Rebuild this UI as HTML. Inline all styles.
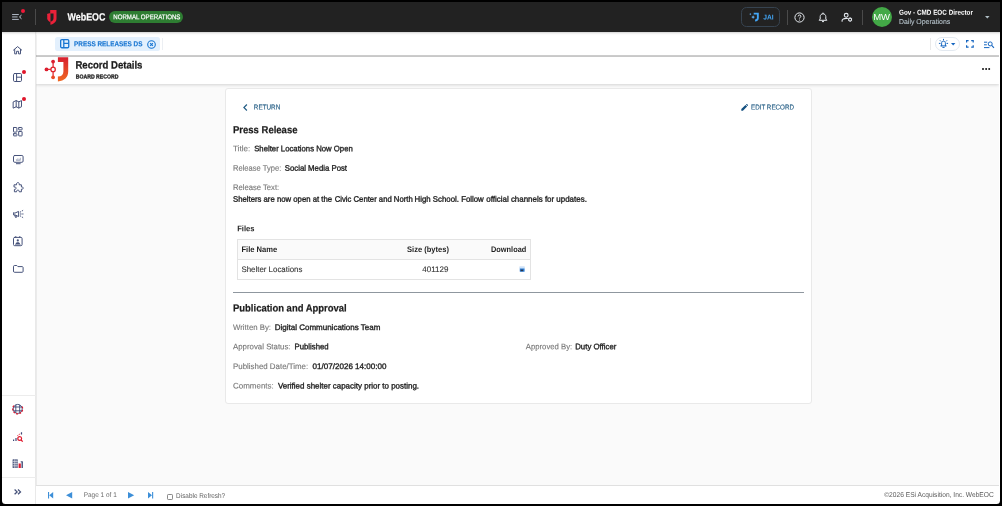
<!DOCTYPE html>
<html lang="en">
<head>
<meta charset="utf-8">
<title>WebEOC - Record Details</title>
<style>
*{box-sizing:border-box;margin:0;padding:0}
html,body{width:1002px;height:506px;overflow:hidden;background:#000}
body{font-family:"Liberation Sans",sans-serif;color:#222;position:relative}
.a{position:absolute}
.t{position:absolute;left:0;top:0;white-space:nowrap;line-height:20px;transform-origin:0 0;text-rendering:geometricPrecision}
svg{position:absolute;overflow:visible}
#frame{position:absolute;left:0;top:0;width:1002px;height:506px;background:#fafafa;overflow:hidden;will-change:transform}
#bezel{position:absolute;left:1.6px;top:1.7px;width:998.9px;height:502.7px;border-radius:0 0 3.5px 3.5px;box-shadow:0 0 0 14px #000;z-index:50;pointer-events:none}
#hdr{left:0;top:0;width:1002px;height:31.6px;background:#222;box-shadow:0 0 3px rgba(0,0,0,.35)}
#tabs{left:36px;top:32px;width:962.8px;height:25px;background:#fff;border-bottom:2px solid #cecece}
#rec{left:36px;top:57px;width:962.8px;height:27px;background:#fff;box-shadow:0 1px 3px rgba(0,0,0,.16)}
#side{left:0;top:32px;width:36px;height:474px;background:#fff;border-right:1px solid #e9e9e9;box-shadow:.5px 0 1px rgba(0,0,0,.06)}
#card{left:225px;top:88px;width:587px;height:315.5px;background:#fff;border:1px solid #e9e9e9;border-radius:3px}
#foot{left:36px;top:485px;width:962.8px;height:21px;background:#fff;border-top:1px solid #e0e0e0}
.vd{position:absolute;width:1px;background:#4a4a4a}
.dot{position:absolute;width:4px;height:4px;border-radius:50%;background:#e0162b}
.si{stroke:#46527a;fill:none;stroke-width:1;stroke-linecap:round;stroke-linejoin:round}
.bi{stroke:#1565c0;fill:none;stroke-width:1;stroke-linecap:round;stroke-linejoin:round}
</style>
</head>
<body>
<div id="frame">
  <div id="tabs" class="a"></div>
  <div id="rec" class="a"></div>
  <div id="side" class="a"></div>
  <div id="card" class="a"></div>
  <div id="foot" class="a"></div>
  <div class="a" style="left:998.8px;top:31px;width:4px;height:475px;background:#fff"></div>
  <div id="hdr" class="a"></div>

  <!-- ===== header ===== -->
  <svg style="left:12.2px;top:14px" width="10" height="6" viewBox="0 0 10 6"><path d="M.1 .55H6.8M.1 2.95H5.6M.1 5.4H6.8" stroke="#c3cddb" stroke-width=".9" fill="none"/><path d="M9.5 1.1L7.5 2.95L9.5 4.8" stroke="#c9d3e0" stroke-width="1" fill="none"/></svg>
  <div class="dot" style="left:20.6px;top:8.9px;width:4.6px;height:4.6px;background:#f01838"></div>
  <div class="vd" style="left:35px;top:9.1px;height:15.6px"></div>
  <!-- Juvare shield -->
  <svg style="left:46.8px;top:9.6px" width="9.8" height="15" viewBox="0 0 9.8 15"><path fill="#ea2139" d="M3.2 .1H9.5V8.4C9.5 11.8 6.9 13.8 3.4 14.8V11.8C5.4 11.1 6.5 10.1 6.5 8.2V3.4H3.2Z"/><path fill="#ea2139" d="M.2 4.2C.2 4 .3 3.9 .5 3.8L3.5 3V12.3C1.5 11.4 .2 10.1 .2 8.3Z"/></svg>
  <div class="a" style="left:109.2px;top:11px;width:74.3px;height:12px;border-radius:6px;background:#2e7d32"></div>
  <div class="a" style="left:741px;top:6.8px;width:39.2px;height:20.3px;border:1px solid #364350;border-radius:5.5px"></div>
  <!-- JAI icon -->
  <svg style="left:748.5px;top:12.2px" width="10" height="10" viewBox="0 0 10 10"><path d="M4.7 .8H9.8V5.9C9.8 8 8.3 9.2 6.1 9.4V7.6C7.3 7.4 7.9 6.9 7.9 5.8V2.5H4.7Z" fill="#42a5f5"/><path d="M4.1 3.2L4.7 4.5L6 5.1L4.7 5.7L4.1 7L3.5 5.7L2.2 5.1L3.5 4.5Z" fill="#64b5f6"/><path d="M1.3 1L1.65 1.75L2.4 2.1L1.65 2.45L1.3 3.2L.95 2.45L.2 2.1L.95 1.75Z" fill="#64b5f6"/></svg>
  <div class="vd" style="left:787px;top:9.5px;height:15px"></div>
  <!-- help -->
  <svg style="left:794.3px;top:11.6px" width="11" height="11" viewBox="0 0 11 11"><circle cx="5.5" cy="5.5" r="4.6" stroke="#e8ecf1" stroke-width="1" fill="none"/><path d="M4.1 4.4C4.1 3.5 4.7 3 5.5 3C6.3 3 6.9 3.5 6.9 4.3C6.9 5.2 5.5 5.4 5.5 6.5" stroke="#e8ecf1" stroke-width="1" fill="none"/><circle cx="5.5" cy="8" r=".6" fill="#e8ecf1"/></svg>
  <!-- bell -->
  <svg style="left:818px;top:11.6px" width="10" height="11" viewBox="0 0 10 11"><path d="M1.2 8.3H8.8L7.8 7V4.6C7.8 3 6.6 1.8 5 1.8C3.4 1.8 2.2 3 2.2 4.6V7Z" stroke="#e8ecf1" stroke-width="1" fill="none" stroke-linejoin="round"/><path d="M4 9.6H6" stroke="#e8ecf1" stroke-width="1"/><circle cx="5" cy="1.2" r=".7" fill="#e8ecf1"/></svg>
  <!-- person gear -->
  <svg style="left:840.5px;top:11.6px" width="12" height="11" viewBox="0 0 12 11"><circle cx="5.2" cy="3.3" r="1.9" stroke="#e4e9ef" stroke-width="1.1" fill="none"/><path d="M1.1 9.2V8.5C1.1 7.1 2.9 6.4 5.2 6.4C5.7 6.4 6.1 6.45 6.5 6.5" stroke="#e4e9ef" stroke-width="1.1" fill="none" stroke-linecap="round"/><circle cx="9.1" cy="7.6" r="1.5" stroke="#e4e9ef" stroke-width="1.1" fill="none"/><path d="M9.1 5.3V5.9M9.1 9.3V9.9M7.1 6.45L7.6 6.75M10.6 8.45L11.1 8.75M7.1 8.75L7.6 8.45M10.6 6.75L11.1 6.45" stroke="#e4e9ef" stroke-width=".8"/></svg>
  <div class="vd" style="left:862px;top:9.5px;height:15px"></div>
  <div class="a" style="left:871.8px;top:6.7px;width:20.2px;height:20.2px;border-radius:50%;background:#43a947"></div>
  <svg style="left:985px;top:16px" width="4.6" height="2.6" viewBox="0 0 46 26"><path d="M0 0H46L23 26Z" fill="#b0bec5"/></svg>

  <!-- ===== tab bar ===== -->
  <div class="a" style="left:54.7px;top:36.8px;width:105.5px;height:14.4px;border-radius:2.5px;background:#e3f0fd"></div>
  <svg style="left:60px;top:39.4px" width="9.4" height="9.4" viewBox="0 0 9.4 9.4"><rect x=".65" y=".65" width="8.1" height="8.1" rx="1.2" stroke="#1976d2" stroke-width="1.3" fill="none"/><path d="M3.8 .6V8.8M3.8 4.3H8.8" stroke="#1976d2" stroke-width="1.3" fill="none"/></svg>
  <svg style="left:147.2px;top:39.6px" width="9" height="9" viewBox="0 0 9 9"><circle cx="4.5" cy="4.5" r="3.8" stroke="#1976d2" stroke-width="1.1" fill="none"/><path d="M3.1 3.1L5.9 5.9M5.9 3.1L3.1 5.9" stroke="#1976d2" stroke-width="1.1"/></svg>
  <div class="a" style="left:161.6px;top:38px;width:1px;height:12px;background:#eceff3"></div>
  <div class="a" style="left:930.2px;top:38.3px;width:1px;height:11.4px;background:#e9e9e9"></div>
  <div class="a" style="left:935px;top:36.9px;width:24.7px;height:13.9px;border:1px solid #e3e9f0;border-radius:7px"></div>
  <!-- alarm/bug icon -->
  <svg style="left:938.8px;top:39px" width="9" height="9.4" viewBox="0 0 9 9.4"><path class="bi" d="M2.6 6.9V4.2C2.6 3 3.4 2.2 4.5 2.2C5.6 2.2 6.4 3 6.4 4.2V6.9M1.8 6.9H7.2M3.8 8.4H5.2"/><path class="bi" d="M4.5 .3V1M1.2 1.6L1.8 2.2M7.8 1.6L7.2 2.2M.3 4.4H1.1M7.9 4.4H8.7"/></svg>
  <svg style="left:950.8px;top:42.8px" width="4.4" height="2.4" viewBox="0 0 44 24"><path d="M0 0H44L22 24Z" fill="#1565c0"/></svg>
  <!-- fullscreen -->
  <svg style="left:965.8px;top:40px" width="7.8" height="7.8" viewBox="0 0 7.8 7.8"><path d="M.6 2.6V.6H2.6M5.2 .6H7.2V2.6M7.2 5.2V7.2H5.2M2.6 7.2H.6V5.2" stroke="#1565c0" stroke-width="1.2" fill="none"/></svg>
  <!-- list search -->
  <svg style="left:984px;top:40.6px" width="10.4" height="7.6" viewBox="0 0 10.4 7.6"><path d="M0 1.2H3.2M0 3.8H2.8M0 6.6H5.4" stroke="#1565c0" stroke-width="1"/><circle cx="6.2" cy="2.9" r="2" stroke="#1565c0" stroke-width="1" fill="none"/><path d="M7.7 4.4L10 6.8" stroke="#1565c0" stroke-width="1.1"/></svg>

  <!-- ===== record header ===== -->
  <svg style="left:44px;top:57px" width="25" height="25" viewBox="0 0 25 25">
    <defs><linearGradient id="jg" x1="0" y1="0" x2="0" y2="1"><stop offset="0" stop-color="#d81f2f"/><stop offset="1" stop-color="#f06a22"/></linearGradient></defs>
    <path d="M13.9 .3H24.2V14.6C24.2 20.6 20.4 23.9 13.9 24.6V19.6C17.6 19.2 19.4 17.6 19.4 14.4V4.9H13.9Z" fill="url(#jg)"/>
    <path d="M9.1 4.6V20.3M2.5 12.4H9.1" stroke="#e3303a" stroke-width="1.3" fill="none"/>
    <circle cx="9.1" cy="12.4" r="2.2" stroke="#e0262e" stroke-width="1.3" fill="#fff"/>
    <circle cx="9.1" cy="4.6" r="1.9" fill="#dc1f30"/><circle cx="9.1" cy="20.3" r="1.9" fill="#ea4a26"/><circle cx="2.5" cy="12.4" r="1.9" fill="#dc1f30"/>
  </svg>
  <div class="a" style="left:981.9px;top:68.2px;width:2px;height:2px;border-radius:50%;background:#111;box-shadow:3.1px 0 0 #111,6.2px 0 0 #111"></div>

  <!-- ===== sidebar icons ===== -->
  <!-- home -->
  <svg style="left:13.4px;top:46px" width="9.2" height="8.4" viewBox="0 0 9.2 8.4"><path class="si" d="M.5 4.1L4.6 .6L8.7 4.1M1.7 3.4V7.9H3.6V5.3H5.6V7.9H7.5V3.4"/></svg>
  <!-- boards -->
  <svg style="left:12.7px;top:73px" width="9" height="9" viewBox="0 0 9 9"><rect class="si" x=".5" y=".5" width="8" height="8" rx="1.2"/><path class="si" d="M3.6 .5V8.5M3.6 4.2H8.5"/></svg>
  <div class="dot" style="left:21.7px;top:69.5px"></div>
  <!-- map -->
  <svg style="left:12.7px;top:100.2px" width="9" height="8.6" viewBox="0 0 9 8.6"><path class="si" d="M.5 1.8L3.2 .6L5.8 1.8L8.5 .6V6.8L5.8 8L3.2 6.8L.5 8ZM3.2 .6V6.8M5.8 1.8V8"/></svg>
  <div class="dot" style="left:21.7px;top:96.8px"></div>
  <!-- dashboards -->
  <svg style="left:13px;top:127.4px" width="9.6" height="9.4" viewBox="0 0 9.6 9.4"><rect class="si" x=".5" y=".5" width="3.4" height="4.6" rx=".4"/><rect class="si" x="5.7" y=".5" width="3.4" height="2.4" rx=".4"/><rect class="si" x=".5" y="6.7" width="3.4" height="2.2" rx=".4"/><rect class="si" x="5.7" y="4.5" width="3.4" height="4.4" rx=".4"/></svg>
  <!-- monitor -->
  <svg style="left:12.7px;top:155px" width="10.6" height="9.2" viewBox="0 0 10.6 9.2"><rect class="si" x=".5" y=".5" width="9.6" height="6.8" rx="1.2"/><path class="si" d="M3.4 8.7H7.2"/><path d="M3 5.4H7.6M3.4 4.2V5M4.8 3.4V5M6.2 3.8V5M7.4 2.8V5" stroke="#8a93ad" stroke-width=".7" fill="none"/></svg>
  <!-- puzzle -->
  <svg style="left:12.6px;top:181.8px" width="10.6" height="10.6" viewBox="0 0 10.6 10.6"><path class="si" d="M1.4 2.8H3.6C3.2 1.6 3.8 .6 4.9 .6C6 .6 6.6 1.6 6.2 2.8H8.4V5C9.4 4.6 10.1 5.2 10.1 6.1C10.1 7 9.4 7.6 8.4 7.2V9.8H6.2C6.5 8.8 5.9 8.2 4.9 8.2C3.9 8.2 3.3 8.8 3.6 9.8H1.4V7.4C2.4 7.7 3 7.1 3 6.2C3 5.3 2.4 4.7 1.4 5Z"/></svg>
  <!-- megaphone -->
  <svg style="left:12.6px;top:210.2px" width="10.6" height="8.2" viewBox="0 0 10.6 8.2"><path class="si" d="M.6 3V5H2.2L5.6 6.6V1.4L2.2 3ZM1.8 5.2L2.4 7.4H3.4L3 5.4"/><path class="si" d="M7.4 4H8.2M7.2 2.2L7.9 1.6M7.2 5.8L7.9 6.4M9.4 .8L9.8 .5M9.6 4H10.1M9.4 7.2L9.8 7.5" stroke-width=".9"/></svg>
  <!-- contacts badge -->
  <svg style="left:13.2px;top:235.8px" width="9.6" height="10.2" viewBox="0 0 9.6 10.2"><rect class="si" x=".5" y="1.4" width="8.6" height="8.3" rx="1.2"/><path class="si" d="M2.8 .5V1.4M6.8 .5V1.4"/><circle cx="4.8" cy="4.4" r="1.1" fill="#46527a"/><path d="M2.6 8C2.6 6.8 3.6 6.2 4.8 6.2C6 6.2 7 6.8 7 8Z" fill="#46527a"/><path d="M2 8.6H7.6" stroke="#46527a" stroke-width=".6"/></svg>
  <!-- folder -->
  <svg style="left:12.6px;top:265px" width="10.6" height="7.8" viewBox="0 0 10.6 7.8"><path class="si" d="M.5 1.4C.5 .9 .9 .5 1.4 .5H3.8L4.9 1.6H9.2C9.7 1.6 10.1 2 10.1 2.5V6.4C10.1 6.9 9.7 7.3 9.2 7.3H1.4C.9 7.3 .5 6.9 .5 6.4Z"/></svg>

  <div class="a" style="left:2px;top:395px;width:34px;height:1px;background:#ececec"></div>
  <!-- globe -->
  <svg style="left:12.2px;top:403px" width="11.4" height="11.8" viewBox="0 0 11.4 11.8"><circle cx="5.7" cy="5.9" r="4.5" stroke="#3d4a78" stroke-width=".9" fill="none"/><path d="M3.8 1.9V9.9M7.7 1.9V9.9M1.4 4H10M1.4 7.8H10" stroke="#3d4a78" stroke-width=".9" fill="none"/><path d="M1.9 2.6A5 5 0 1 0 9.5 2.6" stroke="#e0162b" stroke-width="1.2" fill="none" stroke-dasharray="1.9 1.3"/></svg>
  <!-- chart search -->
  <svg style="left:12.2px;top:432px" width="11" height="9.8" viewBox="0 0 11 9.8"><path d="M1.6 7.6V9M4 6V9M9.5 .3V2.5" stroke="#3d4a78" stroke-width="1.2"/><path d="M5.4 3.6L8.6 1.6" stroke="#e0162b" stroke-width=".9" stroke-dasharray="1.1 .7"/><circle cx="7.7" cy="6.5" r="1.9" stroke="#e0162b" stroke-width="1.2" fill="none"/><path d="M9.1 8L10.7 9.6" stroke="#e0162b" stroke-width="1.3"/></svg>
  <!-- building -->
  <svg style="left:12.2px;top:458.8px" width="11" height="9" viewBox="0 0 11 9"><rect x=".6" y=".2" width="5.1" height="8.8" rx=".5" fill="#46527a"/><path d="M2.35 .2V9M4 .2V9M.6 2.4H5.7M.6 4.6H5.7M.6 6.8H5.7" stroke="#fff" stroke-width=".55"/><rect x="6.6" y="4.5" width="2.2" height="4.5" fill="#e0162b"/><rect x="9.5" y="2.6" width="1.4" height="6.4" fill="#46527a"/><path d="M8 2.9L10.2 1.9L10.9 3.4" fill="#46527a"/></svg>
  <div class="a" style="left:2px;top:477.4px;width:34px;height:1px;background:#ececec"></div>
  <svg style="left:14.2px;top:488.5px" width="7.2" height="5.8" viewBox="0 0 7.2 5.8"><path d="M.6 .5L3.1 2.9L.6 5.3M4 .5L6.5 2.9L4 5.3" stroke="#46527a" stroke-width="1.3" fill="none"/></svg>

  <!-- ===== card content ===== -->
  <svg style="left:242.8px;top:103.7px" width="4.6" height="7" viewBox="0 0 4.6 7"><path d="M3.9 .5L.9 3.5L3.9 6.5" stroke="#265f86" stroke-width="1.2" fill="none"/></svg>
  <svg style="left:741px;top:104.1px" width="7" height="7" viewBox="0 0 7 7"><path d="M.3 6.7V5.1L4.5 .9L6.1 2.5L1.9 6.7ZM5 .5L5.5 0C5.7 -.1 5.9 -.1 6.1 .1L6.9 .9C7.1 1.1 7.1 1.3 7 1.5L6.5 2Z" fill="#145080"/></svg>
  <div class="a" style="left:237px;top:239px;width:294px;height:41px;border:1px solid #e3e3e3;background:#fff"></div>
  <div class="a" style="left:238px;top:240px;width:292px;height:19.7px;background:#fafafa;border-bottom:1px solid #e3e3e3"></div>
  <svg style="left:519.4px;top:266.4px" width="6.2" height="6.2" viewBox="0 0 6.2 6.2"><rect x=".3" y=".3" width="5.6" height="5.6" rx=".8" fill="#cfe2f7"/><rect x=".9" y="2.5" width="4.6" height="3.2" fill="#2f7fd6"/><rect x="1.6" y="3.6" width="2.6" height="1.6" fill="#26354d"/></svg>
  <div class="a" style="left:233px;top:292px;width:570.5px;height:1px;background:#8f979f"></div>

  <!-- ===== footer ===== -->
  <svg style="left:47.6px;top:492px" width="5.2" height="6.4" viewBox="0 0 5.2 6.4"><path d="M0 0H1.1V6.4H0ZM5.2 0V6.4L1.2 3.2Z" fill="#3d8fd8"/></svg>
  <svg style="left:66.3px;top:492px" width="6.2" height="6.4" viewBox="0 0 6.2 6.4"><path d="M6.2 0V6.4L0 3.2Z" fill="#3d8fd8"/></svg>
  <svg style="left:128.2px;top:492px" width="6.2" height="6.4" viewBox="0 0 6.2 6.4"><path d="M0 0V6.4L6.2 3.2Z" fill="#3d8fd8"/></svg>
  <svg style="left:147.7px;top:492px" width="5.2" height="6.4" viewBox="0 0 5.2 6.4"><path d="M5.2 0H4.1V6.4H5.2ZM0 0V6.4L4 3.2Z" fill="#3d8fd8"/></svg>
  <div class="a" style="left:166.7px;top:493.5px;width:6px;height:6px;border:.7px solid #8a8a8a;border-radius:1.2px;background:#fff"></div>

<span class="t" style="font-size:10.54px;font-weight:700;color:#fff;transform:matrix(0.8444,0.0005,0,1,67.57,7.50);-webkit-text-stroke:.2px #fff">WebEOC</span>
<span class="t" style="font-size:6.92px;color:#fff;transform:matrix(0.8833,0.0005,0,1,113.29,8.20);-webkit-text-stroke:.2px #fff">NORMAL OPERATIONS</span>
<span class="t" style="font-size:6.92px;font-weight:700;color:#42a5f5;transform:matrix(0.9645,0.0005,0,1,763.30,8.50);">JAI</span>
<span class="t" style="font-size:8.88px;color:#fff;transform:matrix(1.0730,0.0005,0,1,873.16,7.00);">MW</span>
<span class="t" style="font-size:7.13px;font-weight:700;color:#fff;transform:matrix(0.8892,0.0005,0,1,899.00,2.70);">Gov - CMD EOC Director</span>
<span class="t" style="font-size:7.13px;color:#b4c1c9;transform:matrix(0.9738,0.0005,0,1,899.00,12.00);-webkit-text-stroke:.1px #b4c1c9">Daily Operations</span>
<span class="t" style="font-size:7.23px;font-weight:700;color:#1976d2;transform:matrix(0.8841,0.0005,0,1,74.04,34.30);-webkit-text-stroke:.15px #1976d2">PRESS RELEASES DS</span>
<span class="t" style="font-size:10.54px;font-weight:700;color:#1c1c1c;transform:matrix(0.9088,0.0005,0,1,75.42,55.40);-webkit-text-stroke:.28px #1c1c1c">Record Details</span>
<span class="t" style="font-size:5.78px;font-weight:700;color:#222;transform:matrix(0.8940,0.0005,0,1,75.73,67.60);-webkit-text-stroke:.28px #222">BOARD RECORD</span>
<span class="t" style="font-size:7.13px;color:#265f86;transform:matrix(0.8901,0.0005,0,1,253.83,97.40);-webkit-text-stroke:.15px #265f86">RETURN</span>
<span class="t" style="font-size:7.13px;color:#265f86;transform:matrix(0.8776,0.0005,0,1,751.00,97.40);-webkit-text-stroke:.15px #265f86">EDIT RECORD</span>
<span class="t" style="font-size:10.33px;font-weight:700;color:#1c1c1c;transform:matrix(0.9200,0.0005,0,1,233.00,121.30);-webkit-text-stroke:.2px #1c1c1c">Press Release</span>
<span class="t" style="font-size:8.06px;color:#777;transform:matrix(1.0000,0.0005,0,1,233.00,139.20);-webkit-text-stroke:.12px #777">Title:</span>
<span class="t" style="font-size:8.06px;color:#1f1f1f;transform:matrix(0.9622,0.0005,0,1,254.18,139.20);-webkit-text-stroke:.34px #1f1f1f">Shelter Locations Now Open</span>
<span class="t" style="font-size:8.06px;color:#777;transform:matrix(0.9412,0.0005,0,1,233.00,158.80);-webkit-text-stroke:.12px #777">Release Type:</span>
<span class="t" style="font-size:8.06px;color:#1f1f1f;transform:matrix(0.9669,0.0005,0,1,284.74,158.80);-webkit-text-stroke:.34px #1f1f1f">Social Media Post</span>
<span class="t" style="font-size:8.06px;color:#777;transform:matrix(0.9500,0.0005,0,1,233.00,178.00);-webkit-text-stroke:.12px #777">Release Text:</span>
<span class="t" style="font-size:8.06px;color:#1f1f1f;transform:matrix(0.9625,0.0005,0,1,233.00,189.70);-webkit-text-stroke:.34px #1f1f1f">Shelters are now open at the </span>
<span class="t" style="font-size:8.06px;color:#1f1f1f;transform:matrix(0.9583,0.0005,0,1,334.70,189.70);-webkit-text-stroke:.34px #1f1f1f">Civic Center and North </span>
<span class="t" style="font-size:8.06px;color:#1f1f1f;transform:matrix(0.9720,0.0005,0,1,414.61,189.70);-webkit-text-stroke:.34px #1f1f1f">High School. Follow </span>
<span class="t" style="font-size:8.06px;color:#1f1f1f;transform:matrix(0.9870,0.0005,0,1,486.32,189.70);-webkit-text-stroke:.34px #1f1f1f">official channels for updates.</span>
<span class="t" style="font-size:8.06px;font-weight:700;color:#1f1f1f;transform:matrix(0.9443,0.0005,0,1,237.13,219.20);">Files</span>
<span class="t" style="font-size:8.06px;font-weight:700;color:#1f1f1f;transform:matrix(0.9412,0.0005,0,1,241.42,240.00);">File Name</span>
<span class="t" style="font-size:8.06px;font-weight:700;color:#1f1f1f;transform:matrix(0.9352,0.0005,0,1,407.07,240.00);">Size (bytes)</span>
<span class="t" style="font-size:8.06px;font-weight:700;color:#1f1f1f;transform:matrix(0.9155,0.0005,0,1,491.04,240.00);">Download</span>
<span class="t" style="font-size:8.06px;color:#333;transform:matrix(0.9800,0.0005,0,1,241.44,260.00);-webkit-text-stroke:.1px #333">Shelter Locations</span>
<span class="t" style="font-size:8.06px;color:#333;transform:matrix(0.9958,0.0005,0,1,422.31,260.00);-webkit-text-stroke:.1px #333">401129</span>
<span class="t" style="font-size:10.33px;font-weight:700;color:#1c1c1c;transform:matrix(0.9161,0.0005,0,1,233.00,299.40);-webkit-text-stroke:.2px #1c1c1c">Publication and Approval</span>
<span class="t" style="font-size:8.06px;color:#777;transform:matrix(0.9692,0.0005,0,1,233.00,317.90);-webkit-text-stroke:.12px #777">Written By:</span>
<span class="t" style="font-size:8.06px;color:#1f1f1f;transform:matrix(0.9941,0.0005,0,1,274.70,317.90);-webkit-text-stroke:.34px #1f1f1f">Digital Communications Team</span>
<span class="t" style="font-size:8.06px;color:#777;transform:matrix(0.9746,0.0005,0,1,233.01,337.30);-webkit-text-stroke:.12px #777">Approval Status:</span>
<span class="t" style="font-size:8.06px;color:#1f1f1f;transform:matrix(0.9653,0.0005,0,1,294.53,337.30);-webkit-text-stroke:.34px #1f1f1f">Published</span>
<span class="t" style="font-size:8.06px;color:#777;transform:matrix(0.9609,0.0005,0,1,525.79,337.30);-webkit-text-stroke:.12px #777">Approved By:</span>
<span class="t" style="font-size:8.06px;color:#1f1f1f;transform:matrix(0.9713,0.0005,0,1,575.23,337.30);-webkit-text-stroke:.34px #1f1f1f">Duty Officer</span>
<span class="t" style="font-size:8.06px;color:#777;transform:matrix(0.9811,0.0005,0,1,233.00,356.90);-webkit-text-stroke:.12px #777">Published Date/Time:</span>
<span class="t" style="font-size:8.06px;color:#1f1f1f;transform:matrix(1.0000,0.0005,0,1,312.60,356.90);-webkit-text-stroke:.34px #1f1f1f">01/07/2026 14:00:00</span>
<span class="t" style="font-size:8.06px;color:#777;transform:matrix(0.9900,0.0005,0,1,233.00,376.40);-webkit-text-stroke:.12px #777">Comments:</span>
<span class="t" style="font-size:8.06px;color:#1f1f1f;transform:matrix(0.9895,0.0005,0,1,277.90,376.40);-webkit-text-stroke:.34px #1f1f1f">Verified shelter capacity prior to posting.</span>
<span class="t" style="font-size:6.82px;color:#6a6a6a;transform:matrix(0.9480,0.0005,0,1,83.70,486.00);">Page 1 of 1</span>
<span class="t" style="font-size:6.82px;color:#5e5e5e;transform:matrix(0.9385,0.0005,0,1,176.12,487.00);">Disable Refresh?</span>
<span class="t" style="font-size:7.13px;color:#5a5a5a;transform:matrix(0.9313,0.0005,0,1,884.21,484.90);">©2026 ESi Acquisition, Inc. WebEOC</span>
</div>
<div id="bezel"></div>
</body>
</html>
